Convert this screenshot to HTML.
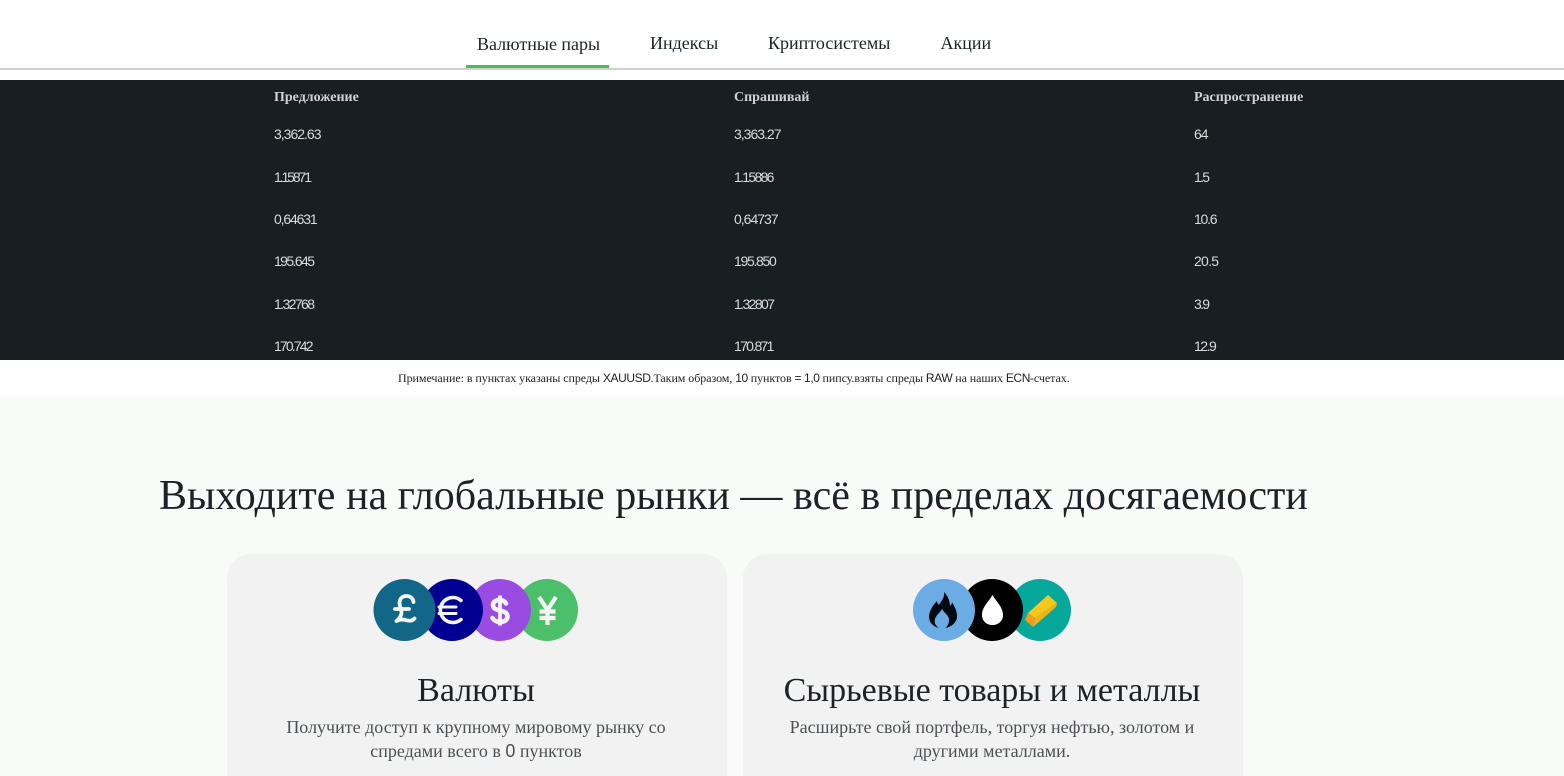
<!DOCTYPE html>
<html lang="ru"><head><meta charset="utf-8"><title>Спреды</title>
<style>
*{box-sizing:border-box}
html,body{margin:0;padding:0;width:1564px;height:776px;overflow:hidden;background:#fff}
body{position:relative;font-family:"Liberation Serif",serif;color:#1c2225}
.a{position:absolute;white-space:nowrap}
.tab{top:33px;font-size:18px;line-height:21px;color:#1c2225}
.th{font-weight:bold;font-size:14px;line-height:16px;color:#d0d2d3}
.td{font-family:"Liberation Sans",sans-serif;font-size:14px;line-height:16px;color:#d8dadb;letter-spacing:-1px}
.card{position:absolute;top:554px;width:500px;height:260px;background:#f2f2f2;border-radius:24px}
.c{text-align:center}
.l{font-family:'Liberation Sans',sans-serif;letter-spacing:-.4px}
</style></head><body>
<div class="a tab" style="left:477px;top:34px">Валютные пары</div>
<div class="a tab" style="left:650px">Индексы</div>
<div class="a tab" style="left:768px">Криптосистемы</div>
<div class="a tab" style="left:940.5px">Акции</div>
<div class="a" style="left:0;top:68px;width:1564px;height:2px;background:#d0d0d0"></div>
<div class="a" style="left:466px;top:65px;width:143px;height:3px;background:#4cbb5c"></div>

<div class="a" style="left:0;top:80px;width:1564px;height:280px;background:#181f22;overflow:hidden">
<div class="a th" style="left:274px;top:10px">Предложение</div><div class="a th" style="left:734px;top:10px">Спрашивай</div><div class="a th" style="left:1194px;top:10px">Распространение</div>
<div class="a td" style="left:274px;top:46px">3,362.63</div><div class="a td" style="left:734px;top:46px">3,363.27</div><div class="a td" style="left:1194px;top:46px">64</div>
<div class="a td" style="left:274px;top:89px;letter-spacing:-2.1px">1.15871</div><div class="a td" style="left:734px;top:89px;letter-spacing:-1.7px">1.15886</div><div class="a td" style="left:1194px;top:89px;letter-spacing:-1.7px">1.5</div>
<div class="a td" style="left:274px;top:131px;letter-spacing:-1.15px">0,64631</div><div class="a td" style="left:734px;top:131px">0,64737</div><div class="a td" style="left:1194px;top:131px;letter-spacing:-1.25px">10.6</div>
<div class="a td" style="left:274px;top:173px;letter-spacing:-1.6px">195.645</div><div class="a td" style="left:734px;top:173px;letter-spacing:-1.3px">195.850</div><div class="a td" style="left:1194px;top:173px;letter-spacing:-.75px">20.5</div>
<div class="a td" style="left:274px;top:216px;letter-spacing:-1.6px">1.32768</div><div class="a td" style="left:734px;top:216px;letter-spacing:-1.6px">1.32807</div><div class="a td" style="left:1194px;top:216px;letter-spacing:-1.7px">3.9</div>
<div class="a td" style="left:274px;top:258px;letter-spacing:-1.85px">170.742</div><div class="a td" style="left:734px;top:258px;letter-spacing:-1.7px">170.871</div><div class="a td" style="left:1194px;top:258px;letter-spacing:-1.5px">12.9</div>
</div>

<div class="a" style="left:398px;top:371px;font-size:12px;line-height:14px;color:#222;letter-spacing:-.06px">Примечание: в пунктах указаны спреды <span class="l">XAUUSD</span>.Таким образом, <span class="l">10</span> пунктов <span class="l">= 1,0</span> пипсу.взяты спреды <span class="l">RAW</span> на наших <span class="l">ECN</span>-счетах.</div>

<div class="a" style="left:0;top:396px;width:1564px;height:380px;background:#f9fbf9"></div>
<div class="a" style="left:159px;top:471px;font-size:42px;line-height:50px;color:#1c2225;letter-spacing:.02px">Выходите на глобальные рынки — всё в пределах досягаемости</div>

<div class="card" style="left:227px"></div>
<div class="card" style="left:743px"></div>

<svg class="a" style="left:370px;top:576px" width="212" height="68" viewBox="0 0 212 68">
<circle cx="177" cy="34" r="31" fill="#4cbf6b"/>
<circle cx="130" cy="34" r="31" fill="#9a4ce2"/>
<circle cx="82" cy="34" r="31" fill="#000091"/>
<circle cx="34.5" cy="34" r="31" fill="#126788"/>
<g fill="none" stroke="#f4f4f4" stroke-linejoin="round">
<path d="M43.5 26c-.5-4-3.500-6-7-6-4.500 0-7 3-7 7 0 3.500 2 6 2 9.500 0 3.500-2 6-5 8.500 3-1.500 6-1.800 9-1 3 1 6.500 1.500 9-1.500M25 33h14" stroke-width="3.800" stroke-linecap="round"/>
<path d="M91 24.500a12.500 12.500 0 1 0 0 19" stroke-width="3.600" stroke-linecap="round"/>
<path d="M69 31h17M69 37.500h17" stroke-width="3" stroke-linecap="round"/>
<path d="M136 27.500c-1.500-2.500-4-3.500-6.500-3.500-3.500 0-6.500 1.800-6.500 5 0 7.500 14.500 3.500 14.500 11.500 0 3.500-3.500 5.500-7.500 5.500-3 0-6-1.500-7.500-4" stroke-width="4.600" stroke-linecap="round"/>
<path d="M130 19.500v30" stroke-width="3.800"/>
<path d="M169 21l8.500 13 8.500-13M177.500 34v15M169.500 35.500h16M169.500 42h16" stroke-width="4.200" stroke-linecap="butt"/>
</g>
</svg>

<svg class="a" style="left:909px;top:576px" width="166" height="68" viewBox="0 0 166 68">
<circle cx="131" cy="34" r="31" fill="#07a89c"/>
<circle cx="83" cy="34" r="31" fill="#000"/>
<circle cx="35" cy="34" r="31" fill="#6cace4"/>
<path d="M35 16c1 6-3 9-5 13-1-1-2-2-2-4-4 4-8 10-8 16 0 6 5 10 10 11-3-2-5-5-4-9 1-4 5-6 7-10 2 4 7 6 7 11 0 3-1 6-4 8 6-1 12-5 12-12 0-6-3-10-5-14 0 2-1 3-2 4 0-6-3-11-6-14z" fill="#050a12"/>
<path d="M83.500 19c4 7 10.500 12 10.500 20 0 6-4.500 10-10.500 10S73 45 73 39c0-8 6.500-13 10.500-20z" fill="#fff"/>
<path d="M119 37l20-18 9 8-22 15z" fill="#f6c81e"/>
<path d="M126 42l22-15-1 4-23 20z" fill="#eeb414"/>
<path d="M116 44l3-7 7 5-2 9z" fill="#f39c1f"/>
</svg>

<div class="a c" style="left:227px;top:672px;width:498px;font-size:34px;line-height:38px;color:#1c2225">Валюты</div>
<div class="a c" style="left:227px;top:715px;width:498px;font-size:18px;line-height:24px;color:#4c5052">Получите доступ к крупному мировому рынку со<br>спредами всего в <span style="font-family:'Liberation Sans',sans-serif">0</span> пунктов</div>
<div class="a c" style="left:743px;top:672px;width:498px;font-size:34px;line-height:38px;color:#1c2225">Сырьевые товары и металлы</div>
<div class="a c" style="left:743px;top:715px;width:498px;font-size:18px;line-height:24px;color:#4c5052">Расширьте свой портфель, торгуя нефтью, золотом и<br>другими металлами.</div>
</body></html>
